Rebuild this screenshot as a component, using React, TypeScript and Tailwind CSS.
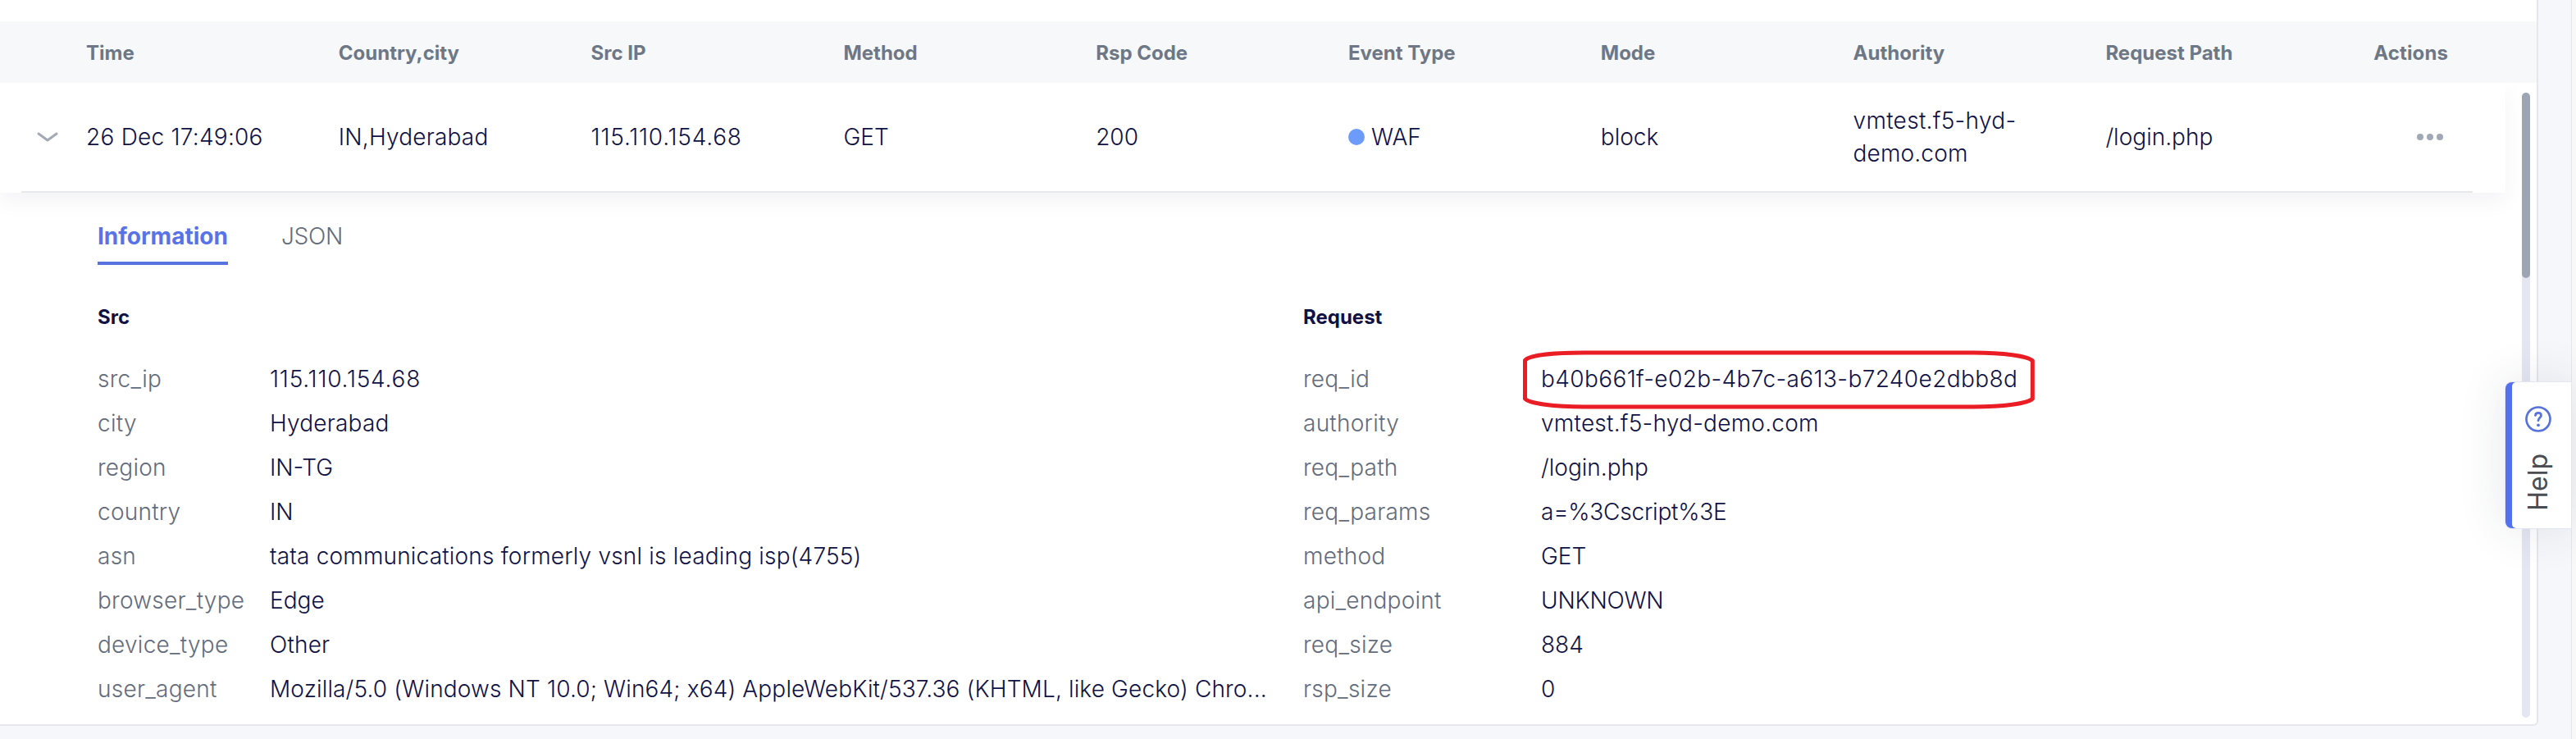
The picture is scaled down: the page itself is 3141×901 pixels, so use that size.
const headers = ["Time", "Country,city", "Src IP", "Method", "Rsp Code", "Event Type", "Mode", "Authority", "Request Path"];

type Row = [label: string, value: string, tracking?: string];

const src: Row[] = [
  ["src_ip", "115.110.154.68", "tracking-[0.8px]"],
  ["city", "Hyderabad", "tracking-[0.2px]"],
  ["region", "IN-TG"],
  ["country", "IN"],
  ["asn", "tata communications formerly vsnl is leading isp(4755)", "tracking-[0.19px]"],
  ["browser_type", "Edge"],
  ["device_type", "Other", "tracking-[0.2px]"],
  ["user_agent", "Mozilla/5.0 (Windows NT 10.0; Win64; x64) AppleWebKit/537.36 (KHTML, like Gecko) Chro...", "tracking-[0.15px]"],
];

const request: Row[] = [
  ["req_id", "b40b661f-e02b-4b7c-a613-b7240e2dbb8d", "tracking-[0.39px]"],
  ["authority", "vmtest.f5-hyd-demo.com", "tracking-[0.25px]"],
  ["req_path", "/login.php"],
  ["req_params", "a=%3Cscript%3E", "tracking-[-0.2px]"],
  ["method", "GET"],
  ["api_endpoint", "UNKNOWN", "tracking-[-0.2px]"],
  ["req_size", "884"],
  ["rsp_size", "0"],
];

function Fields({ title, rows, wide }: { title: string; rows: Row[]; wide?: boolean }) {
  return (
    <section className={wide ? "w-[1470px]" : "w-[1400px]"}>
      <h3 className="text-[24px] leading-8 font-bold">{title}</h3>
      <dl className="mt-8">
        {rows.map(([label, value, tracking = "tracking-normal"]) => (
          <div key={label} className="flex h-[54px] items-center whitespace-nowrap">
            <dt className={wide ? "w-[210px] tracking-[0.25px] text-[#636c7c]" : "w-[290px] tracking-[0.25px] text-[#636c7c]"}>{label}</dt>
            <dd className="relative">
              <span className={tracking}>{value}</span>
              {label === "req_id" && (
                <svg className="absolute -top-[15px] -left-[23px] h-[72px] w-[626px]" viewBox="0 0 626 72" fill="none" stroke="#ea1c24" strokeWidth="5">
                  <path d="M3.500 12.500C8 6 40 3 75 3H550C586 3 617 7 622.300 13V59C617 65 586 69 550 69H75C40 69 8 65 3.500 59Z" />
                </svg>
              )}
            </dd>
          </div>
        ))}
      </dl>
    </section>
  );
}

export default function App() {
  return (
    <div className="relative flex h-[901px] w-[3141px] overflow-hidden bg-[#f6f7fa] font-['Inter',sans-serif] text-[28px] leading-10 font-light text-[#0f1245]">
      <main className="relative h-[885px] w-[3095px] overflow-hidden rounded-br-[6px] border-r-2 border-b-2 border-[#e5e6ee] bg-white pt-[26px]">
        <div className="relative z-10 flex h-[75px] items-center bg-[#f6f8fa] pt-[2px] pl-[105px] text-[24px] font-bold text-[#6e7786]">
          {headers.map((h) => (
            <div key={h} className="w-[307.8px] shrink-0">{h}</div>
          ))}
          <div className="ml-[19px] tracking-[0.15px]">Actions</div>
        </div>

        <div className="relative h-[134px] w-[3055px] bg-white shadow-[0_10px_26px_rgba(20,20,80,0.05)]">
          <div className="flex h-[132px] items-center">
            <div className="w-[105px] shrink-0 pl-[44px]">
              <svg className="h-[14px] w-[28px]" viewBox="0 0 28 14" fill="none" stroke="#a3aab6" strokeWidth="3" strokeLinecap="round" strokeLinejoin="round">
                <path d="M3 3L14 11L25 3" />
              </svg>
            </div>
            <div className="w-[307.8px] shrink-0 tracking-[0.25px]">26 Dec 17:49:06</div>
            <div className="w-[307.8px] shrink-0 tracking-[0.2px]">IN,Hyderabad</div>
            <div className="w-[307.8px] shrink-0 tracking-[0.8px]">115.110.154.68</div>
            <div className="w-[307.8px] shrink-0">GET</div>
            <div className="w-[307.8px] shrink-0">200</div>
            <div className="flex w-[307.8px] shrink-0 items-center gap-[8px]">
              <span className="size-5 rounded-full bg-[#6d9bfb]" />
              WAF
            </div>
            <div className="w-[307.8px] shrink-0">block</div>
            <div className="w-[307.8px] shrink-0 tracking-[0.3px]">vmtest.f5-hyd-<br /><span className="tracking-[0.15px]">demo.com</span></div>
            <div className="w-[307.8px] shrink-0">/login.php</div>
            <div className="ml-[71.500px] flex gap-[3.500px]">
              <span className="size-[8.500px] rounded-full bg-[#a1a9b6]" />
              <span className="size-[8.500px] rounded-full bg-[#a1a9b6]" />
              <span className="size-[8.500px] rounded-full bg-[#a1a9b6]" />
            </div>
          </div>
          <div className="ml-[26px] h-[2px] w-[2989px] bg-[#e7e7ee]" />
        </div>

        <div className="relative pt-[33px] pl-[119px]">
          <nav className="flex gap-[65px]">
            <div className="h-[55px] border-b-4 border-[#5873e0] font-bold text-[#5873e8]">Information</div>
            <div className="tracking-[-0.2px] text-[#636c7c]">JSON</div>
          </nav>
          <div className="mt-[48px] flex">
            <Fields title="Src" rows={src} wide />
            <Fields title="Request" rows={request} />
          </div>
        </div>

        <div className="absolute top-[113px] left-[3075px] h-[762px] w-[10px] rounded-full bg-[#e4e6f2]">
          <div className="h-[226px] rounded-full bg-[#9da5b5]" />
        </div>
      </main>

      <div className="absolute top-0 right-0 h-full w-[6px] border-l border-[#e6e7eb] bg-[#f8f8f9]" />

      <aside className="absolute top-[466px] left-[3055px] h-[178px] w-[80px] rounded-l-[8px] bg-[#5270f0] pl-[8px] shadow-[0_0_0_1px_#e2e5f2,0_0_60px_rgba(40,50,80,0.12)]">
        <div className="flex h-full flex-col items-center rounded-l-[5px] bg-white pt-[29px] pr-[8px]">
          <svg className="size-8" viewBox="0 0 32 32" fill="none" stroke="#5872dd" strokeWidth="2.700" strokeLinecap="round">
            <circle cx="16" cy="16" r="14.500" />
            <path d="M12.500 11.300C12.800 7.500 19.500 7.300 19.500 11.500C19.500 14.200 16 14.300 16 17.800" strokeWidth="2.800" />
            <circle cx="16" cy="23.300" r="1.900" fill="#5872dd" stroke="none" />
          </svg>
          <div className="mt-[26px] rotate-180 text-[32px] font-normal text-[#4a4d52] [writing-mode:vertical-rl]">Help</div>
        </div>
      </aside>
    </div>
  );
}
